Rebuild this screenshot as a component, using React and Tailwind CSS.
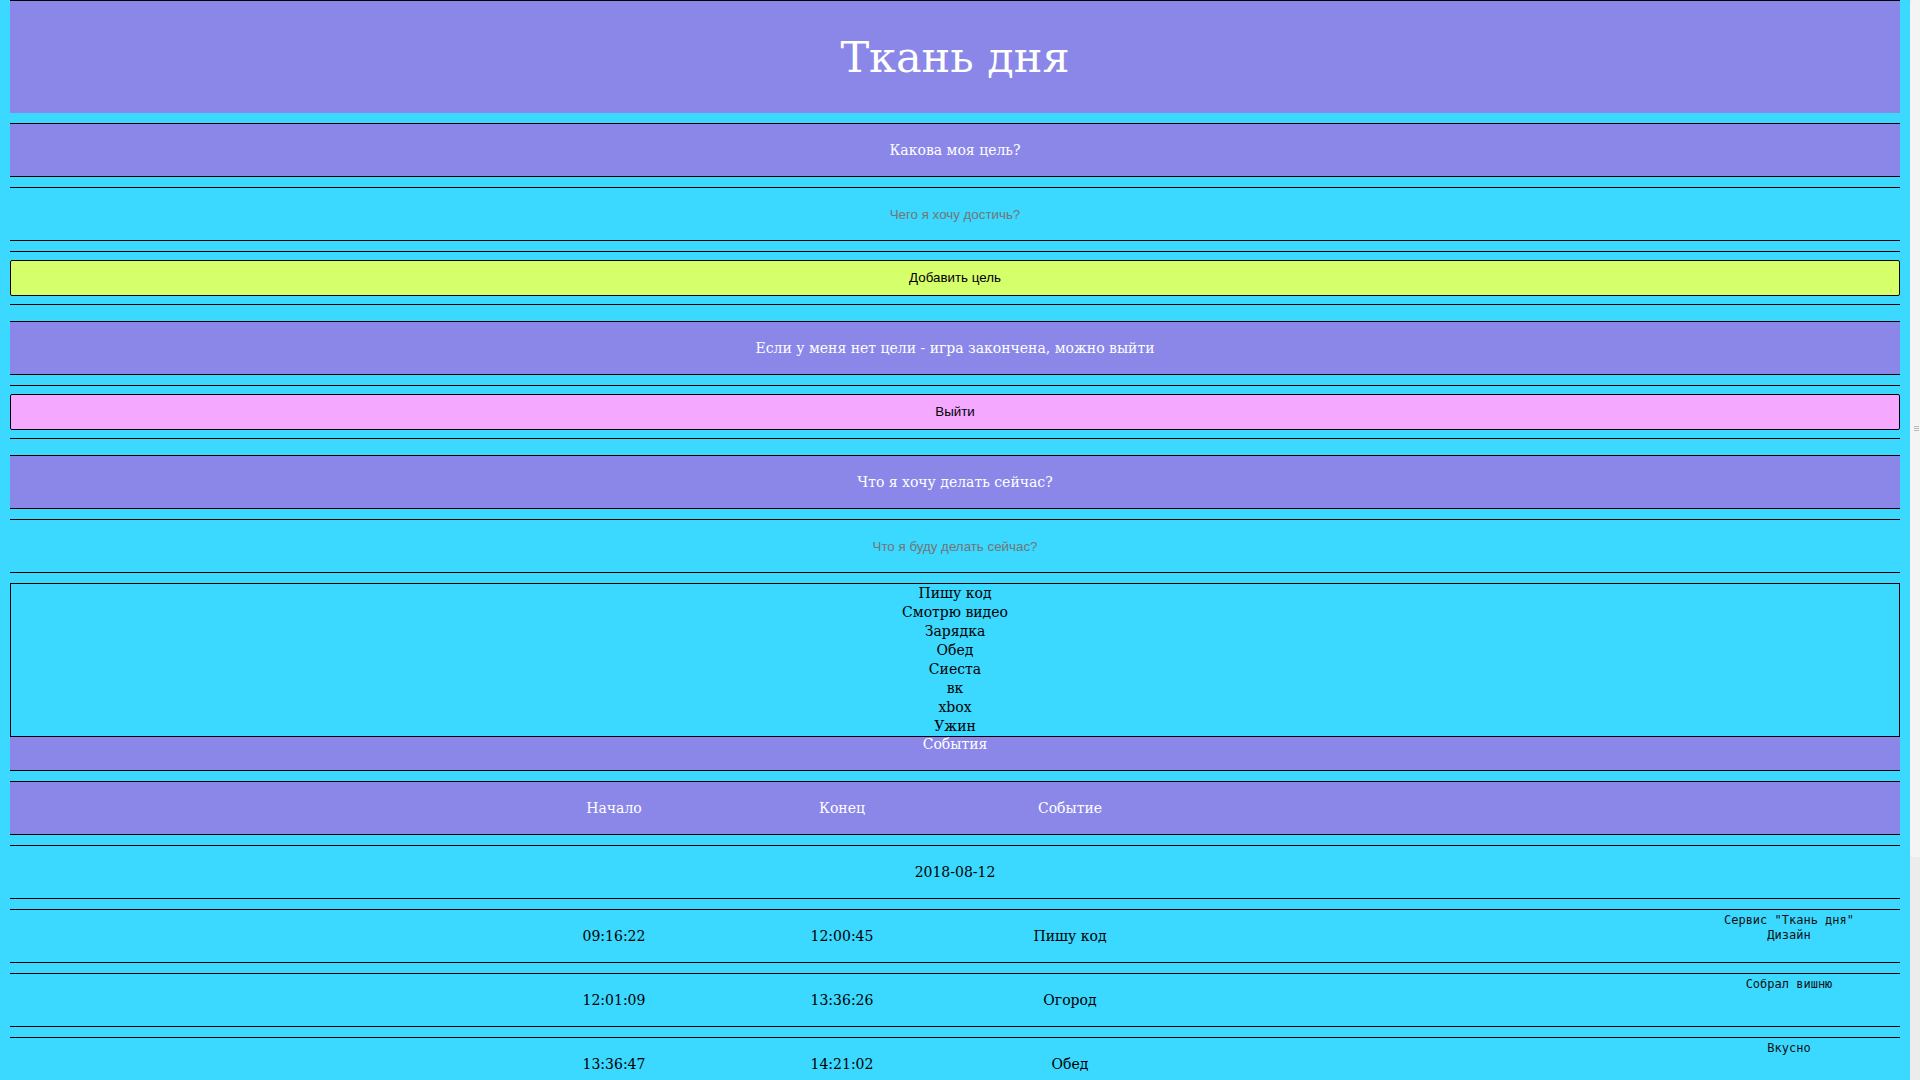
import React from "react";

const rows = [
  { s: "09:16:22", e: "12:00:45", ev: "Пишу код", c: ['Сервис "Ткань дня"', "Дизайн"] },
  { s: "12:01:09", e: "13:36:26", ev: "Огород", c: ["Собрал вишню"] },
  { s: "13:36:47", e: "14:21:02", ev: "Обед", c: ["Вкусно"] },
];

const items = ["Пишу код", "Смотрю видео", "Зарядка", "Обед", "Сиеста", "вк", "xbox", "Ужин"];

function Heading({ children, className = "" }) {
  return (
    <div
      className={
        "h-[54px] border-y border-black bg-[#8a87e8] flex items-center justify-center text-white text-[14px] " +
        className
      }
    >
      {children}
    </div>
  );
}

function InputBox({ placeholder }) {
  return (
    <div className="mt-[10px] h-[54px] border-y border-black">
      <input
        placeholder={placeholder}
        className="w-full h-full bg-transparent text-center outline-none text-[13.33px] font-['Liberation_Sans',Arial,sans-serif] placeholder:text-[#757575]"
      />
    </div>
  );
}

function ButtonBox({ children, color }) {
  return (
    <div className="mt-[10px] h-[54px] border-y border-black py-[8px]">
      <button
        className={
          "w-full h-[36px] border border-black rounded-[2px] text-black text-[13.33px] font-['Liberation_Sans',Arial,sans-serif] " +
          color
        }
      >
        {children}
      </button>
    </div>
  );
}

export default function App() {
  return (
    <div className="h-screen w-full overflow-hidden bg-[#3bd8ff] flex font-['DejaVu_Serif',serif]">
      <div className="w-[1910px] shrink-0 px-[10px]">
        <header className="h-[113px] border-t border-black bg-[#8a87e8] flex items-center justify-center text-white text-[43px]">
          Ткань дня
        </header>

        <Heading className="mt-[10px]">Какова моя цель?</Heading>
        <InputBox placeholder="Чего я хочу достичь?" />
        <ButtonBox color="bg-[#d5ff6b]">Добавить цель</ButtonBox>

        <Heading className="mt-[16px]">Если у меня нет цели - игра закончена, можно выйти</Heading>
        <ButtonBox color="bg-[#f4a8ff]">Выйти</ButtonBox>

        <Heading className="mt-[16px]">Что я хочу делать сейчас?</Heading>
        <InputBox placeholder="Что я буду делать сейчас?" />

        <div className="mt-[10px] h-[154px] border border-black text-black text-[14px] leading-[19px] text-center">
          {items.map((it) => (
            <div key={it}>{it}</div>
          ))}
        </div>
        <div className="h-[34px] border-b border-black bg-[#8a87e8] text-white text-[14px] leading-[15px] text-center">
          События
        </div>

        <div className="mt-[10px] h-[54px] border-y border-black bg-[#8a87e8] grid grid-cols-[490px_228px_228px_228px_1fr_222px] items-center text-white text-[14px] text-center">
          <div />
          <div>Начало</div>
          <div>Конец</div>
          <div>Событие</div>
          <div />
          <div />
        </div>

        <div className="mt-[10px] h-[54px] border-y border-black flex items-center justify-center text-black text-[14px]">
          2018-08-12
        </div>

        {rows.map((r) => (
          <div
            key={r.s}
            className="mt-[10px] h-[54px] border-y border-black grid grid-cols-[490px_228px_228px_228px_1fr_222px] items-center text-black text-[14px] text-center"
          >
            <div />
            <div>{r.s}</div>
            <div>{r.e}</div>
            <div>{r.ev}</div>
            <div />
            <div className="self-start pt-[3px] text-[12px] leading-[15px] font-['DejaVu_Sans_Mono',monospace] text-[#111]">
              {r.c.map((l) => (
                <div key={l}>{l}</div>
              ))}
            </div>
          </div>
        ))}
      </div>

      <div className="w-[10px] h-full bg-[#ececec] flex flex-col">
        <div className="h-[857px] bg-[#f4f4f4] rounded-l-[4px] flex flex-col items-center justify-center gap-[1px] pl-[2px]">
          <div className="w-[5px] h-px bg-[#bbb]" />
          <div className="w-[5px] h-px bg-[#bbb]" />
          <div className="w-[5px] h-px bg-[#bbb]" />
        </div>
      </div>
    </div>
  );
}
